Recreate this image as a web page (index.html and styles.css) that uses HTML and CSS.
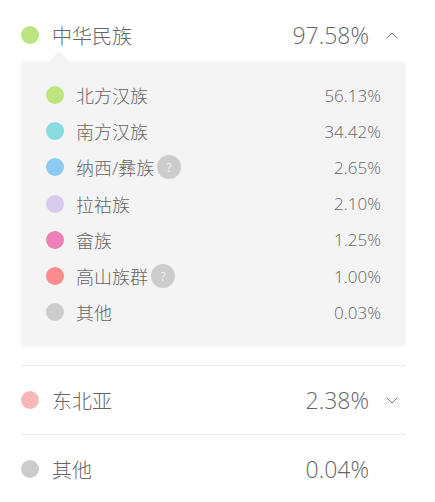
FILE: index.html
```html
<!DOCTYPE html>
<html lang="zh">
<head>
<meta charset="utf-8">
<link rel="stylesheet" href="styles.css">
</head>
<body>
<div class="list">
  <div class="group open">
    <div class="head">
      <span class="dot" style="background:#bde57f"></span>
      <span class="label">中华民族</span>
      <span class="pct">97.58%</span>
      <span class="chev"><svg width="12" height="7" viewBox="0 0 12 7"><polyline points="0.5,6.5 6,1 11.5,6.5" fill="none" stroke="#777" stroke-width="1"/></svg></span>
    </div>
    <div class="panel">
      <div class="item"><span class="sdot" style="background:#bde57f"></span><span class="slabel">北方汉族</span><span class="spct">56.13%</span></div>
      <div class="item"><span class="sdot" style="background:#86dcdf"></span><span class="slabel">南方汉族</span><span class="spct">34.42%</span></div>
      <div class="item"><span class="sdot" style="background:#8ccaf2"></span><span class="slabel">纳西/彝族</span><span class="help">?</span><span class="spct">2.65%</span></div>
      <div class="item"><span class="sdot" style="background:#d6caef"></span><span class="slabel">拉祜族</span><span class="spct">2.10%</span></div>
      <div class="item"><span class="sdot" style="background:#ee7fb7"></span><span class="slabel">畲族</span><span class="spct">1.25%</span></div>
      <div class="item"><span class="sdot" style="background:#fc8b8b"></span><span class="slabel">高山族群</span><span class="help">?</span><span class="spct">1.00%</span></div>
      <div class="item"><span class="sdot" style="background:#cccccc"></span><span class="slabel">其他</span><span class="spct">0.03%</span></div>
    </div>
  </div>
  <div class="group">
    <div class="head">
      <span class="dot" style="background:#fcb6b6"></span>
      <span class="label">东北亚</span>
      <span class="pct">2.38%</span>
      <span class="chev"><svg width="12" height="7" viewBox="0 0 12 7"><polyline points="0.5,0.5 6,6 11.5,0.5" fill="none" stroke="#777" stroke-width="1"/></svg></span>
    </div>
  </div>
  <div class="group last">
    <div class="head">
      <span class="dot" style="background:#cccccc"></span>
      <span class="label">其他</span>
      <span class="pct">0.04%</span>
      <span class="chev"></span>
    </div>
  </div>
</div>
</body>
</html>
```
FILE: styles.css
```css
html, body {
  margin: 0;
  padding: 0;
  background: #fff;
}
body {
  font-family: "Open Sans", "Noto Sans CJK SC", sans-serif;
  font-weight: 300;
  color: #555;
}
.list {
  padding: 0 29px 0 21px;
}
.group {
  border-bottom: 1px solid #ececec;
}
.group.last {
  border-bottom: none;
}
.head {
  display: flex;
  align-items: center;
  height: 68px;
}
.group.open .head {
  height: 50px;
  padding-top: 10px;
}
.dot {
  width: 18px;
  height: 18px;
  border-radius: 50%;
  flex: none;
}
.label {
  margin-left: 13px;
  font-size: 20px;
  color: #666;
  flex: 1;
}
.pct {
  font-size: 23px;
  color: #666;
}
.chev {
  width: 12px;
  height: 7px;
  margin-left: 17px;
  margin-right: 8px;
  display: flex;
}
.panel {
  position: relative;
  background: #f4f4f4;
  border-radius: 4px;
  margin: 2px 0 19px;
  padding: 15px 25px 16px;
}
.panel::before {
  content: "";
  position: absolute;
  top: -11px;
  left: 27px;
  border-left: 11px solid transparent;
  border-right: 11px solid transparent;
  border-bottom: 11px solid #f4f4f4;
}
.item {
  display: flex;
  align-items: center;
  height: 36.2px;
}
.sdot {
  width: 18px;
  height: 18px;
  border-radius: 50%;
  flex: none;
}
.slabel {
  margin-left: 12px;
  font-size: 18px;
  color: #666;
}
.help {
  width: 24px;
  height: 24px;
  border-radius: 50%;
  background: #cccccc;
  color: #f2f2f2;
  font-size: 12px;
  display: flex;
  align-items: center;
  justify-content: center;
  margin-left: 3px;
  font-weight: 400;
}
.spct {
  margin-left: auto;
  font-size: 17px;
  color: #666;
}
```
